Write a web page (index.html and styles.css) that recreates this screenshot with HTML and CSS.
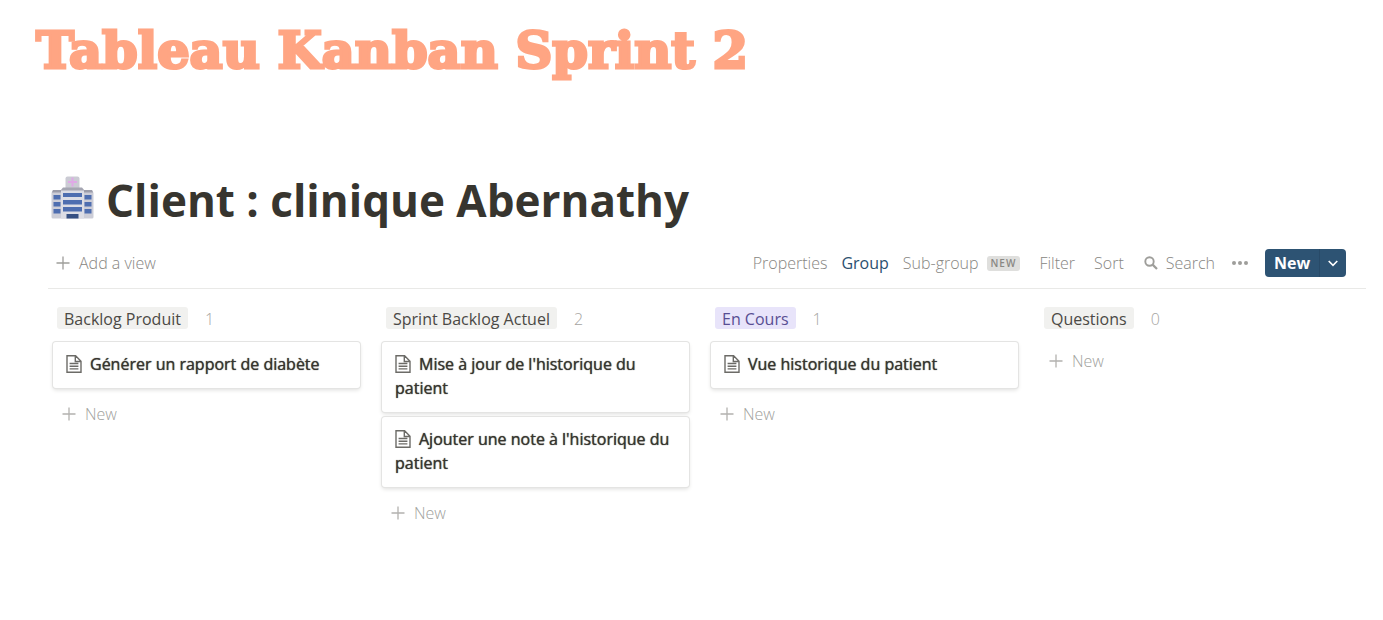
FILE: index.html
```html
<!DOCTYPE html>
<html lang="fr">
<head>
<meta charset="utf-8">
<title>Tableau Kanban Sprint 2</title>
<link rel="stylesheet" href="styles.css">
</head>
<body>
<svg class="defs" aria-hidden="true">
  <symbol id="plus" viewBox="0 0 14 14"><path d="M7 0.5v13M0.5 7h13" fill="none" stroke="currentColor" stroke-width="1.3"/></symbol>
  <symbol id="page" viewBox="0 0 16 18"><path d="M1 .8h8.6l5.4 5.4v11H1zM9.300 1v5.500H15M3.600 8.500h8.800M3.600 11.200h8.800M3.600 13.900h8.800" fill="none" stroke="currentColor" stroke-width="1.400"/></symbol>
</svg>
<h1 class="page-title">Tableau Kanban Sprint 2</h1>
<main class="database">
  <h2 class="db-title">
    <svg class="hospital" viewBox="0 0 43 43" aria-hidden="true">
      <rect x="14.500" y="0.500" width="14" height="13" rx="2" fill="#cbcbd4"/>
      <path d="M21.500 1.500v9M17 6h9" stroke="#dfa9e6" stroke-width="2"/>
      <path d="M1.500 14.500h40l1 2.500v24q0 1.500-1.500 1.500H2q-1.500 0-1.500-1.500V17z" fill="#cccdd7"/>
      <path d="M2 14h39l1 2.500H1z" fill="#9b9ca9"/>
      <path d="M10 14h23v28.500H10z" fill="#dcdde5"/>
      <path d="M12 11.500h19l2.500 3h-24z" fill="#a5a6b2"/>
      <path d="M12 17h19v4H12zM12 24h19v4.500H12zM12 31h19v4.500H12zM2.500 19h7v4.500h-7zM2.500 26h7v4.500h-7zM2.500 33h7v4.500h-7zM33.500 19h7v4.500h-7zM33.500 26h7v4.500h-7zM33.500 33h7v4.500h-7z" fill="#4e6eb0"/>
      <path d="M15.500 38h12v4.500h-12z" fill="#365083"/>
    </svg>
    <span>Client : clinique Abernathy</span>
  </h2>
  <div class="toolbar">
    <button class="tool add-view"><svg class="plus"><use href="#plus"/></svg>Add a view</button>
    <div class="tools">
      <button class="tool">Properties</button>
      <button class="tool active">Group</button>
      <button class="tool sub">Sub-group<span class="badge">NEW</span></button>
      <button class="tool filter">Filter</button>
      <button class="tool sort">Sort</button>
      <button class="tool search"><svg class="glass" viewBox="0 0 14 14" aria-hidden="true"><circle cx="5.500" cy="5.500" r="4.200" fill="none" stroke="currentColor" stroke-width="1.900"/><path d="M8.600 8.600l4.400 4.400" stroke="currentColor" stroke-width="2.200"/></svg>Search</button>
      <button class="tool more" aria-label="More"><svg class="dots" viewBox="0 0 18 6" aria-hidden="true"><g fill="currentColor"><circle cx="3" cy="3" r="2"/><circle cx="9" cy="3" r="2"/><circle cx="15" cy="3" r="2"/></g></svg></button>
      <div class="split">
        <button class="new-main">New</button>
        <button class="new-menu" aria-label="New options"><svg class="chevron" viewBox="0 0 10 7" aria-hidden="true"><path d="M.7 1l4.300 4.300L9.300 1" fill="none" stroke="currentColor" stroke-width="1.600"/></svg></button>
      </div>
    </div>
  </div>
  <div class="board">
    <section class="column">
      <header class="column-head"><h3 class="tag">Backlog Produit</h3><span class="count">1</span></header>
      <article class="card"><svg class="page"><use href="#page"/></svg>Générer un rapport de diabète</article>
      <button class="new-card"><svg class="plus"><use href="#plus"/></svg>New</button>
    </section>
    <section class="column">
      <header class="column-head"><h3 class="tag">Sprint Backlog Actuel</h3><span class="count">2</span></header>
      <article class="card"><svg class="page"><use href="#page"/></svg>Mise à jour de l'historique du patient</article>
      <article class="card"><svg class="page"><use href="#page"/></svg>Ajouter une note à l'historique du patient</article>
      <button class="new-card"><svg class="plus"><use href="#plus"/></svg>New</button>
    </section>
    <section class="column">
      <header class="column-head"><h3 class="tag purple">En Cours</h3><span class="count">1</span></header>
      <article class="card"><svg class="page"><use href="#page"/></svg>Vue historique du patient</article>
      <button class="new-card"><svg class="plus"><use href="#plus"/></svg>New</button>
    </section>
    <section class="column">
      <header class="column-head"><h3 class="tag">Questions</h3><span class="count">0</span></header>
      <button class="new-card"><svg class="plus"><use href="#plus"/></svg>New</button>
    </section>
  </div>
</main>
</body>
</html>
```
FILE: styles.css
```css
* { box-sizing: border-box; }
body {
  margin: 0;
  background: #fff;
  color: #37352f;
  font-family: "Open Sans", "Noto Sans", sans-serif;
  font-size: 16px;
  line-height: 24px;
}
button {
  border: 0;
  padding: 0;
  background: none;
  color: inherit;
  font: inherit;
  white-space: nowrap;
}
h1, h2, h3 { margin: 0; }
.defs { position: absolute; width: 0; height: 0; }
.page-title {
  padding: 16px 36px 0;
  color: #ffa583;
  font-family: "DejaVu Serif", serif;
  font-size: 51px;
  font-weight: 700;
  line-height: 68px;
  -webkit-text-stroke: 3px #ffa583;
}
.database { padding: 84px 17px 0 48px; }
.db-title {
  display: flex;
  align-items: center;
  gap: 12px;
  padding-left: 3px;
  font-size: 44px;
  font-weight: 700;
  line-height: 64px;
}
.hospital { width: 43px; height: 43px; margin-bottom: 6px; }
.toolbar {
  display: flex;
  justify-content: space-between;
  align-items: center;
  height: 57px;
  padding: 6px 20px 0 8px;
  border-bottom: 1px solid #e9e9e7;
}
.tool {
  display: flex;
  align-items: center;
  color: #878682;
  font-weight: 300;
}
.tools { display: flex; align-items: center; gap: 14px; }
.plus { width: 14px; height: 14px; }
.add-view, .new-card { gap: 9px; }
.active { color: #2b5070; font-weight: 400; }
.sub { gap: 8px; }
.badge {
  padding: 0 4px;
  border-radius: 3px;
  background: #dfdfdd;
  color: #898884;
  font-size: 10px;
  font-weight: 600;
  line-height: 15px;
  letter-spacing: 1px;
}
.filter, .sort { margin-left: 5px; }
.search { gap: 8px; margin-left: 6px; }
.more { margin-left: 2px; }
.glass { width: 14px; height: 14px; }
.glass, .dots, .plus { opacity: .8; }
.dots { width: 18px; height: 6px; }
.split {
  display: flex;
  height: 28px;
  margin-left: 2px;
  border-radius: 4px;
  background: #2d5373;
  color: #fff;
  overflow: hidden;
}
.new-main { width: 54px; font-weight: 700; }
.new-menu { width: 27px; border-left: 1px solid #284a68; }
.chevron { display: block; width: 10px; height: 7px; margin: 0 auto; }
.board {
  display: grid;
  grid-template-columns: repeat(4, 1fr);
  gap: 22px;
  padding: 18px 19px 0 5px;
}
.column-head {
  display: flex;
  align-items: center;
  gap: 17px;
  height: 22px;
  margin: 0 4px 13px;
}
.tag {
  padding: 2px 7px 0;
  border-radius: 3px;
  background: #f1f1ef;
  color: #4b4945;
  font-size: 16px;
  font-weight: 400;
  line-height: 20px;
}
.purple { background: #e8e4fa; color: #584e93; }
.count { padding-top: 2px; color: #a5a4a1; font-weight: 300; }
.card {
  margin-bottom: 5px;
  padding: 10px 12px 12px 13px;
  border-radius: 3px;
  background: #fff;
  box-shadow: 0 0 0 1px #e4e4e3, 0 2px 4px #dededc;
  font-weight: 400;
  line-height: 24px;
  text-shadow: 0 0 1px #37352f;
}
.page {
  width: 16px;
  height: 18px;
  margin-right: 8px;
  vertical-align: -3px;
  color: #6c6b67;
}
.new-card {
  display: flex;
  align-items: center;
  margin: 14px 0 0 9px;
  color: #a09f9c;
  font-weight: 300;
}
.column-head + .new-card { margin-top: 20px; }
```
